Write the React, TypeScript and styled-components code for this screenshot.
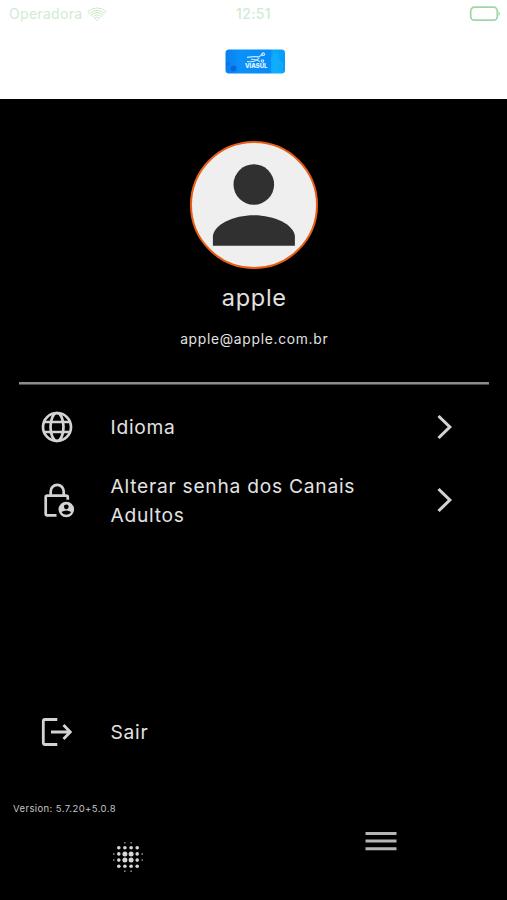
import React from 'react';
import styled, { createGlobalStyle } from 'styled-components';

const GlobalStyle = createGlobalStyle`
  * { box-sizing: border-box; }
  body { margin: 0; background: #000; }
`;

const Screen = styled.div`
  width: 507px;
  height: 900px;
  display: flex;
  flex-direction: column;
  overflow: hidden;
  background: #000;
  color: #e2e2e2;
  font-family: Inter, 'Liberation Sans', sans-serif;
`;

const Header = styled.header`
  height: 98.5px;
  flex: none;
  background: #fff;
`;

const StatusBar = styled.div`
  height: 28px;
  padding: 0 6px 0 9px;
  display: grid;
  grid-template-columns: 1fr 40px 1fr;
  align-items: center;
  color: #d0ebd3;
  font-size: 14px;
  line-height: 28px;
`;

const Carrier = styled.div`
  display: flex;
  align-items: center;
  gap: 5px;
  letter-spacing: 0.3px;
`;

const Clock = styled.div`
  margin-left: -3px;
  text-align: center;
  white-space: nowrap;
  font-weight: 500;
  letter-spacing: 0.4px;
`;

const Battery = styled.svg`
  justify-self: end;
  display: block;
`;

const Brand = styled.div`
  display: flex;
  justify-content: center;
  padding: 21px 0 0 3px;
  svg { display: block; }
`;

const Profile = styled.section`
  height: 283px;
  flex: none;
  display: flex;
  flex-direction: column;
  align-items: center;
  padding-top: 42.5px;
`;

const Avatar = styled.div`
  width: 128px;
  height: 128px;
  border: 2.5px solid #e85e14;
  border-radius: 50%;
  background: #efefef;
  overflow: hidden;
  svg { display: block; }
`;

const Name = styled.h1`
  margin: 14px 0 0;
  padding-left: 1.5px;
  font-size: 23.5px;
  font-weight: 400;
  line-height: 30px;
  letter-spacing: 0.75px;
`;

const Email = styled.p`
  margin: 16px 0 0;
  padding-left: 1.5px;
  font-size: 13.8px;
  line-height: 20px;
  letter-spacing: 0.72px;
`;

const Divider = styled.hr`
  flex: none;
  width: 470px;
  height: 3px;
  margin: 0 0 0 19px;
  border: 0;
  background: linear-gradient(#8c8c8c 66%, #4a4a4a 66%);
`;

const Menu = styled.nav`
  height: 385.5px;
  flex: none;
  display: flex;
  flex-direction: column;
  padding-top: 6px;
`;

const MenuRow = styled.a<{ $last?: boolean }>`
  height: ${p => (p.$last ? 60 : 73)}px;
  margin-top: ${p => (p.$last ? 165 : 0)}px;
  flex: none;
  display: grid;
  grid-template-columns: 69px 270px 1fr;
  align-items: center;
  padding-left: 41px;
  font-size: 19.2px;
  line-height: 29.5px;
  letter-spacing: 0.75px;
  svg { display: block; }
`;

const Label = styled.span`
  padding: 2px 0 0 0.5px;
`;

const Chevron = styled.svg`
  margin-left: 56px;
`;

const Version = styled.div`
  height: 20px;
  flex: none;
  margin: 28.5px 0 0 13px;
  font-size: 9.5px;
  line-height: 20px;
  letter-spacing: 0.4px;
  color: #c5c5c5;
`;

const TabBar = styled.footer`
  height: 81px;
  flex: none;
  display: grid;
  grid-template-columns: 1fr 1fr;
  justify-items: center;
  align-items: start;
  padding-left: 1px;
  svg { display: block; }
`;

const DotsTab = styled.div`
  padding-top: 22.5px;
`;

const MenuTab = styled.div`
  padding-top: 11px;
`;

const ink = '#d3d3d3';

const WifiIcon = () => (
  <svg width="20" height="15" viewBox="0 0 20 15" fill="none" stroke="#cdebd0" strokeWidth="1">
    <path d="M.7 4.6Q10-2.8 19.3 4.6L17.5 6.4Q10 .6 2.5 6.4Z" />
    <path d="M4 7.8Q10 3.3 16 7.8L14.2 9.6Q10 6.3 5.8 9.6Z" />
    <path d="M7.3 11Q10 9 12.7 11L10 13.8Z" />
  </svg>
);

const BatteryIcon = () => (
  <Battery width="32" height="16" viewBox="0 0 32 16" fill="none">
    <rect x="1.7" y="1.2" width="26.6" height="13" rx="3.8" stroke="#9dd7a5" strokeWidth="1.7" />
    <path d="M29.5 5.2q3.4 2.5 0 5Z" fill="#afdeb5" />
  </Battery>
);

const BrandLogo = () => (
  <svg width="60" height="25" viewBox="0 0 60 25">
    <defs>
      <linearGradient id="brand" x1="0" x2="1">
        <stop offset="0" stopColor="#087fed" />
        <stop offset=".25" stopColor="#0b91fb" />
        <stop offset=".75" stopColor="#078bf6" />
        <stop offset=".8" stopColor="#0ca9fb" />
        <stop offset="1" stopColor="#079af7" />
      </linearGradient>
    </defs>
    <rect width="59.5" height="24" x=".5" y=".5" rx="3.5" fill="url(#brand)" />
    <path d="M46 9q2-5 8-5v7l4 2v11H46Z" fill="#12b3fb" opacity=".6" />
    <circle cx="8.5" cy="19.5" r="3" fill="#0866df" />
    <circle cx="3" cy="15" r="1.7" fill="#086fe5" />
    <g fill="none" stroke="#c9ecff" strokeWidth="1.1">
      <path d="M22 8.4q7-1.3 12-.5L37.5 5M22 12.5q6 .7 9-1.1l3-2.2M26 10.2q5 .3 9 2.3" />
      <circle cx="38.2" cy="5.2" r="1.3" />
      <circle cx="37.5" cy="12" r="1.2" />
    </g>
    <text x="20" y="19.3" fill="#e9f8ff" fontFamily="Inter, sans-serif" fontSize="6" fontWeight="800" textLength="22.5" lengthAdjust="spacingAndGlyphs">VIASUL</text>
  </svg>
);

const PersonIcon = () => (
  <svg width="124" height="124" viewBox="0 0 124 124" fill="#303030">
    <circle cx="61.8" cy="41.5" r="20.3" />
    <path d="M20.9 102.7V93C22.4 81.5 41.4 72.3 61.9 72.3S101.4 81.5 102.9 93v9.7Z" />
  </svg>
);

const GlobeIcon = () => (
  <svg width="32" height="32" viewBox="0 0 32 32" fill="none" stroke={ink} strokeWidth="2.7">
    <circle cx="16" cy="16" r="14" />
    <ellipse cx="16" cy="16" rx="6.5" ry="14" />
    <path d="M3 11h26M3 21h26" />
  </svg>
);

const LockIcon = () => (
  <svg width="34" height="36" viewBox="0 0 34 36" fill="none" stroke={ink} strokeWidth="2.7">
    <path d="M15.5 33.3H6.2q-1.5 0-1.5-1.5V15.2q0-1.5 1.5-1.5H25q1.8 0 1.8 1.5v2.5" />
    <path d="M9.7 14V9.3a6.5 6.5 0 0 1 13 0V14" />
    <circle cx="25.3" cy="27.5" r="7.8" fill={ink} stroke="none" />
    <circle cx="25.3" cy="24.8" r="2.4" fill="#000" stroke="none" />
    <path d="M20.4 29.9q4.9-3 9.8 0-1.7 2.9-4.9 2.9t-4.9-2.9Z" fill="#000" stroke="none" />
  </svg>
);

const ExitIcon = () => (
  <svg width="32" height="30" viewBox="0 0 32 30" fill="none" stroke={ink} strokeWidth="2.8">
    <path d="M16.3 2.5H4q-1.7 0-1.7 1.7v21.6q0 1.7 1.7 1.7h12.3M10 15h19M22.5 8l6.8 7-6.8 7" />
  </svg>
);

const ChevronIcon = () => (
  <Chevron width="17" height="26" viewBox="0 0 17 26" fill="none" stroke={ink} strokeWidth="3.1">
    <path d="m2.5 2 11.3 11L2.5 24" />
  </Chevron>
);

const steps = [-14.2, -9.2, -3.1, 3.1, 9.2, 14.2];
const dots = steps.flatMap(y =>
  steps.map(x => ({ x, y, distance: Math.hypot(x, y) }))
).filter(d => d.distance < 14 || (d.distance < 15));

const HalftoneIcon = () => (
  <svg width="32" height="32" viewBox="-16 -16 32 32">
    {dots.map(d => (
      <circle
        key={`${d.x}:${d.y}`}
        cx={d.x}
        cy={d.y}
        r={d.distance < 5 ? 2.5 : d.distance < 13.5 ? 1.8 : 0.9}
        fill={d.distance < 13.5 ? '#d7d7d7' : '#858585'}
      />
    ))}
  </svg>
);

const BarsIcon = () => (
  <svg width="32" height="22" viewBox="0 0 32 22" fill="#b5b5b5">
    <path d="M.5 2h31v3H.5zM.5 9.6h31v3H.5zM.5 17.2h31v3H.5z" />
  </svg>
);

export default function App() {
  return (
    <Screen>
      <GlobalStyle />
      <Header>
        <StatusBar>
          <Carrier>Operadora <WifiIcon /></Carrier>
          <Clock>12:51</Clock>
          <BatteryIcon />
        </StatusBar>
        <Brand><BrandLogo /></Brand>
      </Header>
      <Profile>
        <Avatar><PersonIcon /></Avatar>
        <Name>apple</Name>
        <Email>apple@apple.com.br</Email>
      </Profile>
      <Divider />
      <Menu>
        <MenuRow><GlobeIcon /><Label>Idioma</Label><ChevronIcon /></MenuRow>
        <MenuRow><LockIcon /><Label>Alterar senha dos Canais Adultos</Label><ChevronIcon /></MenuRow>
        <MenuRow $last><ExitIcon /><Label>Sair</Label></MenuRow>
      </Menu>
      <Version>Version: 5.7.20+5.0.8</Version>
      <TabBar>
        <DotsTab><HalftoneIcon /></DotsTab>
        <MenuTab><BarsIcon /></MenuTab>
      </TabBar>
    </Screen>
  );
}
